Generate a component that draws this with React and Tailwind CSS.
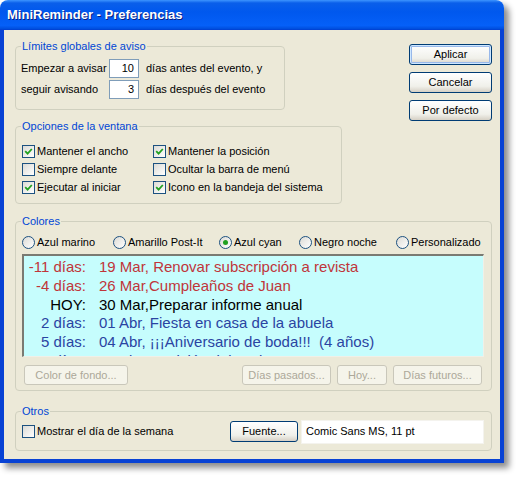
import React from 'react';

const ui = { fontFamily: '"Liberation Sans", Arial, sans-serif' };
const listFont = { fontFamily: '"Liberation Sans", Arial, sans-serif' };

function Group({ title, className, children }) {
  return (
    <fieldset className={`border border-[#D0D0BF] rounded-[4px] px-[5px] ${className}`}>
      <legend className="px-[1px] text-[#0046D5] leading-[13px]">{title}</legend>
      {children}
    </fieldset>
  );
}

function Check({ checked, label }) {
  return (
    <div className="flex items-center gap-[2px] h-[18px] ml-[1px]">
      <span className="w-[13px] h-[13px] shrink-0 border border-[#1C5180] bg-[linear-gradient(135deg,#DCDBD5,#FFFFFF)] flex items-center justify-center">
        {checked && (
          <svg width="9" height="9" viewBox="0 0 9 9">
            <path d="M1.2 4.2 L3.6 6.6 L7.8 2" stroke="#21A121" strokeWidth="1.8" fill="none" />
          </svg>
        )}
      </span>
      <span>{label}</span>
    </div>
  );
}

function Radio({ checked, label, className }) {
  return (
    <div className={`flex items-center gap-[2px] ${className}`}>
      <span className="w-[13px] h-[13px] shrink-0 rounded-full border border-[#1C5180] bg-[linear-gradient(135deg,#DCDBD5,#FFFFFF)] flex items-center justify-center">
        {checked && <span className="w-[5px] h-[5px] rounded-full bg-[#21A121]" />}
      </span>
      <span>{label}</span>
    </div>
  );
}

const btn = 'rounded-[3px] border border-[#003C74] bg-[linear-gradient(#FFFFFF,#F0F0EA_70%,#D6D0C5)] flex items-center justify-center text-black';
const btnOff = 'rounded-[3px] border border-[#C9C7BA] bg-[#F5F4EA] flex items-center justify-center text-[#ACA899] h-[20px]';

const lines = [
  { d: '-11 días:', t: '19 Mar, Renovar subscripción a revista', c: 'text-[#C0353A]' },
  { d: '-4 días:', t: '26 Mar,Cumpleaños de Juan', c: 'text-[#C0353A]' },
  { d: 'HOY:', t: '30 Mar,Preparar informe anual', c: 'text-black' },
  { d: '2 días:', t: '01 Abr, Fiesta en casa de la abuela', c: 'text-[#2A44A2]' },
  { d: '5 días:', t: '04 Abr, ¡¡¡Aniversario de boda!!!  (4 años)', c: 'text-[#2A44A2]' },
  { d: '16 días:', t: '15 Abr, Revisión del coche', c: 'text-[#2A44A2]' },
];

export default function App() {
  return (
    <div className="w-[518px] h-[477px] bg-white text-[11px] text-black" style={ui}>
      <div className="w-[504px] h-[463px] flex flex-col rounded-t-[8px] overflow-hidden shadow-[5px_5px_6px_rgba(0,0,0,0.45)]">
        {/* title bar */}
        <div className="h-[30px] shrink-0 flex items-center px-[7px] bg-[linear-gradient(#3D95FF_0%,#0A5FEA_10%,#0058EE_40%,#0560F8_85%,#0050E0_95%,#003DD0_100%)]">
          <span className="text-white font-bold text-[13px] [text-shadow:1px_1px_0_#0A1E80]">MiniReminder - Preferencias</span>
        </div>

        <div className="flex-1 bg-[#ECE9D8] border-x-[4px] border-b-[4px] border-[#0842D4] pl-[11px] pr-[8px] pt-[10px]">
          <div className="flex">
            <div className="w-[327px]">
              <Group title="Límites globales de aviso" className="w-[270px] pt-[5px] pb-[9px]">
                <div className="flex items-center h-[21px]">
                  <span className="w-[88px]">Empezar a avisar</span>
                  <span className="w-[30px] h-[19px] border border-[#7F9DB9] bg-white flex items-center justify-end pr-[4px]">10</span>
                  <span className="ml-[7px]">días antes del evento, y</span>
                </div>
                <div className="flex items-center h-[21px]">
                  <span className="w-[88px]">seguir avisando</span>
                  <span className="w-[30px] h-[19px] border border-[#7F9DB9] bg-white flex items-center justify-end pr-[4px]">3</span>
                  <span className="ml-[7px]">días después del evento</span>
                </div>
              </Group>

              <Group title="Opciones de la ventana" className="w-full mt-[10px] pt-[9px] pb-[7px]">
                <div className="grid grid-cols-[131px_1fr]">
                  <Check checked label="Mantener el ancho" />
                  <Check checked label="Mantener la posición" />
                  <Check label="Siempre delante" />
                  <Check label="Ocultar la barra de menú" />
                  <Check checked label="Ejecutar al iniciar" />
                  <Check checked label="Icono en la bandeja del sistema" />
                </div>
              </Group>
            </div>

            <div className="ml-auto w-[83px] mt-[4px] flex flex-col gap-[7px]">
              <div className={`${btn} h-[21px] shadow-[inset_0_0_0_1px_#CEE7FF,inset_0_0_0_2px_#98B8EA]`}>Aplicar</div>
              <div className={`${btn} h-[21px]`}>Cancelar</div>
              <div className={`${btn} h-[21px]`}>Por defecto</div>
            </div>
          </div>

          <Group title="Colores" className="w-full mt-[11px] pt-[6px] pb-[5px]">
            <div className="flex items-center h-[16px] ml-[1px]">
              <Radio label="Azul marino" className="w-[91px]" />
              <Radio label="Amarillo Post-It" className="w-[106px]" />
              <Radio checked label="Azul cyan" className="w-[80px]" />
              <Radio label="Negro noche" className="w-[97px]" />
              <Radio label="Personalizado" />
            </div>
            <div className="mt-[4px] ml-[1px] w-[462px] h-[103px] overflow-hidden bg-[#C6FDFD] border-t-2 border-l-2 border-[#7A7A72] border-b border-r border-b-[#F0F0E8] border-r-[#F0F0E8] pt-[2px] text-[15px] leading-[18.8px]" style={listFont}>
              {lines.map((l) => (
                <div key={l.d} className={`flex whitespace-pre ${l.c}`}>
                  <span className="w-[62px] text-right">{l.d}</span>
                  <span className="ml-[13px]">{l.t}</span>
                </div>
              ))}
            </div>
            <div className="flex mt-[8px]">
              <div className={`${btnOff} w-[104px] ml-[3px]`}>Color de fondo...</div>
              <div className="ml-auto mr-[4px] flex gap-[6px]">
                <div className={`${btnOff} w-[89px]`}>Días pasados...</div>
                <div className={`${btnOff} w-[50px]`}>Hoy...</div>
                <div className={`${btnOff} w-[89px]`}>Días futuros...</div>
              </div>
            </div>
          </Group>

          <Group title="Otros" className="w-full mt-[14px] pt-[1px] pb-[6px]">
            <div className="flex items-center h-[25px]">
              <Check label="Mostrar el día de la semana" />
              <div className={`${btn} ml-auto w-[68px] h-[21px]`}>Fuente...</div>
              <div className="ml-[3px] mr-[2px] w-[183px] h-[24px] bg-white border border-[#F4F3EE] flex items-center pl-[4px] text-[11px]">Comic Sans MS, 11 pt</div>
            </div>
          </Group>
        </div>
      </div>
    </div>
  );
}
